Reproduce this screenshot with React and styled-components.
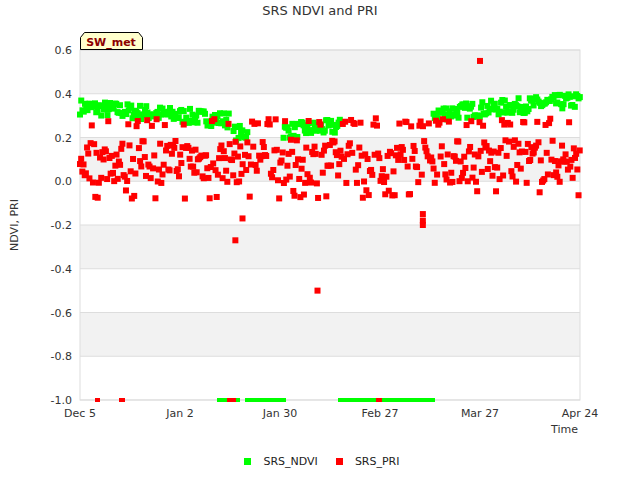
import React from 'react'
import styled, { createGlobalStyle } from 'styled-components'

const Global = createGlobalStyle`
  body { margin: 0; background: #fff; font-family: "DejaVu Sans", sans-serif; }
`

const Page = styled.div`
  width: 640px;
  height: 480px;
  display: flex;
  flex-direction: column;
  position: relative;
`

const Title = styled.div`
  height: 22px;
  text-align: center;
  font-size: 13px;
  color: #333;
  line-height: 22px;
`

const Legend = styled.div`
  display: flex;
  justify-content: center;
  gap: 18px;
  font-size: 11px;
  color: #222;
  margin-top: 13px;
  padding-left: 4px;
`

const LegendItem = styled.div`
  display: flex;
  align-items: center;
  gap: 12px;
`

const Swatch = styled.span`
  width: 7px;
  height: 7px;
  background: ${p => p.$color};
`

const X0 = 80, X1 = 580, TOP = 28
const px = d => X0 + d * (500 / 140)
const py = v => TOP + (0.6 - v) * (350 / 1.6)

let seed = 7
const rnd = () => { seed = (seed * 16807) % 2147483647; return seed / 2147483647 }

const green = []
const red = []
const ndviRanges = [[0, 42, 0.34, -0.06], [43, 47, 0.22, 0], [57, 73, 0.23, 0.02], [99, 140, 0.31, 0.06]]
ndviRanges.forEach(([a, b, base, slope]) => {
  for (let d = a; d <= b; d += 0.35) {
    const t = (d - a) / Math.max(1, b - a)
    green.push([d, base + slope * t + (rnd() - 0.5) * 0.07])
  }
})
for (let d = 0; d <= 140; d += 0.33) {
  if (d > 44 && d < 46 && rnd() < 0.5) continue
  const r = rnd()
  let v
  if (r < 0.12) v = 0.25 + rnd() * 0.04
  else if (r < 0.2) v = -0.08 + rnd() * 0.04
  else v = rnd() * 0.2 - 0.01
  red.push([d, v])
}
red.push([43.5, -0.27], [45.5, -0.17], [66.5, -0.5], [112, 0.55], [96, -0.2], [96, -0.18], [96, -0.15])

const App = () => (
  <Page>
    <Global />
    <Title>SRS NDVI and PRI</Title>
    <svg width="640" height="420" style={{ display: 'block' }} fontFamily="DejaVu Sans, sans-serif">
      {[[0.4, 0.6], [0, 0.2], [-0.4, -0.2], [-0.8, -0.6]].map(([a, b]) => (
        <rect key={a} x={X0} y={py(b)} width={500} height={py(a) - py(b)} fill="#f2f2f2" />
      ))}
      {[0.6, 0.4, 0.2, 0, -0.2, -0.4, -0.6, -0.8, -1.0].map(v => (
        <g key={v}>
          <line x1={X0} x2={X1} y1={py(v)} y2={py(v)} stroke="#ddd" />
          <text x={72} y={py(v) + 4} fontSize="11" fill="#333" textAnchor="end">{v.toFixed(1)}</text>
        </g>
      ))}
      <rect x={X0} y={TOP} width={500} height={350} fill="none" stroke="#ddd" />
      {[['Dec 5', 0], ['Jan 2', 28], ['Jan 30', 56], ['Feb 27', 84], ['Mar 27', 112], ['Apr 24', 140]].map(([l, d]) => (
        <text key={l} x={px(d)} y={395} fontSize="11" fill="#333" textAnchor="middle">{l}</text>
      ))}
      <text x={578} y={411} fontSize="11" fill="#333" textAnchor="end">Time</text>
      <text transform="translate(18 203) rotate(-90)" fontSize="11" fill="#333" textAnchor="middle">NDVI, PRI</text>
      {green.map(([d, v], i) => <rect key={'g' + i} x={px(d) - 3} y={py(v) - 3} width="6" height="6" fill="#00ff00" />)}
      {red.map(([d, v], i) => <rect key={'r' + i} x={px(d) - 3} y={py(v) - 3} width="6" height="6" fill="#ff0000" />)}
      {[[217, 240], [245, 286], [338, 435]].map(([a, b]) => (
        <rect key={a} x={a} y={py(-1) - 2} width={b - a} height="4" fill="#00ff00" />
      ))}
      {[[95, 100], [119, 125], [227, 236], [376, 382]].map(([a, b]) => (
        <rect key={a} x={a} y={py(-1) - 2} width={b - a} height="4" fill="#ff0000" />
      ))}
      <path d="M80.5 27.5 V15.5 L84.5 10.5 H138.5 L142.5 15.5 V27.5 Z" fill="#ffffcc" stroke="#000" />
      <text x={111} y={24} fontSize="11" fontWeight="bold" fill="#8b0000" textAnchor="middle">SW_met</text>
    </svg>
    <Legend>
      <LegendItem><Swatch $color="#00ff00" />SRS_NDVI</LegendItem>
      <LegendItem><Swatch $color="#ff0000" />SRS_PRI</LegendItem>
    </Legend>
  </Page>
)

export default App
